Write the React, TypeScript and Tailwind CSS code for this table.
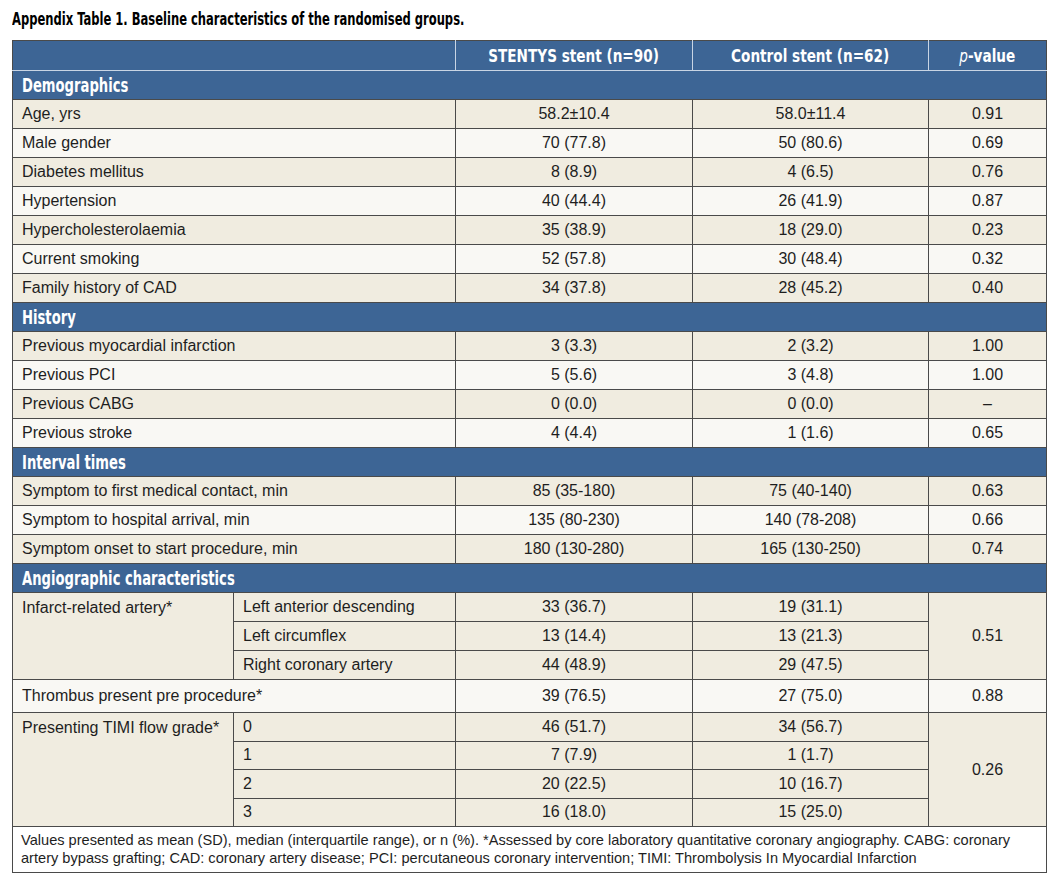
import React from 'react'

const BEIGE = 'bg-[#f0ece0]'
const LIGHT = 'bg-[#f9f8f4]'

type Row = [string, string, string, string]

const sections: { title: string; rows: Row[] }[] = [
  {
    title: 'Demographics',
    rows: [
      ['Age, yrs', '58.2±10.4', '58.0±11.4', '0.91'],
      ['Male gender', '70 (77.8)', '50 (80.6)', '0.69'],
      ['Diabetes mellitus', '8 (8.9)', '4 (6.5)', '0.76'],
      ['Hypertension', '40 (44.4)', '26 (41.9)', '0.87'],
      ['Hypercholesterolaemia', '35 (38.9)', '18 (29.0)', '0.23'],
      ['Current smoking', '52 (57.8)', '30 (48.4)', '0.32'],
      ['Family history of CAD', '34 (37.8)', '28 (45.2)', '0.40'],
    ],
  },
  {
    title: 'History',
    rows: [
      ['Previous myocardial infarction', '3 (3.3)', '2 (3.2)', '1.00'],
      ['Previous PCI', '5 (5.6)', '3 (4.8)', '1.00'],
      ['Previous CABG', '0 (0.0)', '0 (0.0)', '–'],
      ['Previous stroke', '4 (4.4)', '1 (1.6)', '0.65'],
    ],
  },
  {
    title: 'Interval times',
    rows: [
      ['Symptom to first medical contact, min', '85 (35-180)', '75 (40-140)', '0.63'],
      ['Symptom to hospital arrival, min', '135 (80-230)', '140 (78-208)', '0.66'],
      ['Symptom onset to start procedure, min', '180 (130-280)', '165 (130-250)', '0.74'],
    ],
  },
]

const infarct = [
  ['Left anterior descending', '33 (36.7)', '19 (31.1)'],
  ['Left circumflex', '13 (14.4)', '13 (21.3)'],
  ['Right coronary artery', '44 (48.9)', '29 (47.5)'],
]

const timi = [
  ['0', '46 (51.7)', '34 (56.7)'],
  ['1', '7 (7.9)', '1 (1.7)'],
  ['2', '20 (22.5)', '10 (16.7)'],
  ['3', '16 (18.0)', '15 (25.0)'],
]

const cell = 'border border-[#4a4a4a] px-[9px] align-middle'
const num = `${cell} text-center`
// no narrow face installed, so squeeze the condensed one
const head = "font-['DejaVu_Sans_Condensed',sans-serif] font-bold inline-block whitespace-nowrap"

function SectionRow({ title }: { title: string }) {
  return (
    <tr className="h-[29px] bg-[#3d6595]">
      <td colSpan={5} className="border border-[#4a4a4a] px-[9px] text-white leading-none">
        <span className={`${head} text-[19px] scale-x-[0.77] origin-left`}>{title}</span>
      </td>
    </tr>
  )
}

function HeadCell({ children, className = '' }: { children: React.ReactNode; className?: string }) {
  return (
    <th className={`border border-[#c9d5e4] border-t-[#4a4a4a] font-normal ${className}`}>
      <span className={`${head} text-[18px] scale-x-[0.84] origin-center`}>{children}</span>
    </th>
  )
}

export default function App() {
  return (
    <div className="bg-white w-[1064px] h-[887px] pl-[12px] pt-[8px] font-['Liberation_Sans',Arial,sans-serif] text-[16px] text-[#1e1e1e]">
      <div className="leading-[22px] text-black">
        <span className={`${head} text-[17px] scale-x-[0.755] origin-left`}>
          Appendix Table 1. Baseline characteristics of the randomised groups.
        </span>
      </div>
      <table className="mt-[9px] w-[1034px] table-fixed border-collapse border border-[#3a3a3a]">
        <colgroup>
          <col className="w-[221px]" />
          <col className="w-[222px]" />
          <col className="w-[237px]" />
          <col className="w-[236px]" />
          <col className="w-[118px]" />
        </colgroup>
        <thead>
          <tr className="h-[30px] bg-[#3d6595] text-white">
            <th colSpan={2} className="border border-[#c9d5e4] border-l-[#4a4a4a] border-t-[#4a4a4a]" />
            <HeadCell>STENTYS stent (n=90)</HeadCell>
            <HeadCell>Control stent (n=62)</HeadCell>
            <HeadCell className="border-r-[#4a4a4a]">
              <span className="italic font-normal">p</span>-value
            </HeadCell>
          </tr>
        </thead>
        <tbody>
          {sections.map(s => (
            <React.Fragment key={s.title}>
              <SectionRow title={s.title} />
              {s.rows.map((r, i) => (
                <tr key={r[0]} className={`h-[29px] ${i % 2 === 0 ? BEIGE : LIGHT}`}>
                  <td colSpan={2} className={cell}>{r[0]}</td>
                  <td className={num}>{r[1]}</td>
                  <td className={num}>{r[2]}</td>
                  <td className={num}>{r[3]}</td>
                </tr>
              ))}
            </React.Fragment>
          ))}

          <SectionRow title="Angiographic characteristics" />
          {infarct.map((r, i) => (
            <tr key={r[0]} className={`h-[29px] ${BEIGE}`}>
              {i === 0 && (
                <td rowSpan={3} className={`${cell} align-top pt-[3px]`}>Infarct-related artery*</td>
              )}
              <td className={cell}>{r[0]}</td>
              <td className={num}>{r[1]}</td>
              <td className={num}>{r[2]}</td>
              {i === 0 && <td rowSpan={3} className={num}>0.51</td>}
            </tr>
          ))}
          <tr className={`h-[33px] ${LIGHT}`}>
            <td colSpan={2} className={cell}>Thrombus present pre procedure*</td>
            <td className={num}>39 (76.5)</td>
            <td className={num}>27 (75.0)</td>
            <td className={num}>0.88</td>
          </tr>
          {timi.map((r, i) => (
            <tr key={r[0]} className={`h-[28.5px] ${BEIGE}`}>
              {i === 0 && (
                <td rowSpan={4} className={`${cell} align-top pt-[3px]`}>Presenting TIMI flow grade*</td>
              )}
              <td className={cell}>{r[0]}</td>
              <td className={num}>{r[1]}</td>
              <td className={num}>{r[2]}</td>
              {i === 0 && <td rowSpan={4} className={num}>0.26</td>}
            </tr>
          ))}
          <tr className="bg-white">
            <td colSpan={5} className="border border-[#4a4a4a] px-[8px] pt-[4px] pb-[5px] text-[14.6px] leading-[18px]">
              Values presented as mean (SD), median (interquartile range), or n (%). *Assessed by core laboratory quantitative coronary angiography. CABG: coronary artery bypass grafting; CAD: coronary artery disease; PCI: percutaneous coronary intervention; TIMI: Thrombolysis In Myocardial Infarction
            </td>
          </tr>
        </tbody>
      </table>
    </div>
  )
}
